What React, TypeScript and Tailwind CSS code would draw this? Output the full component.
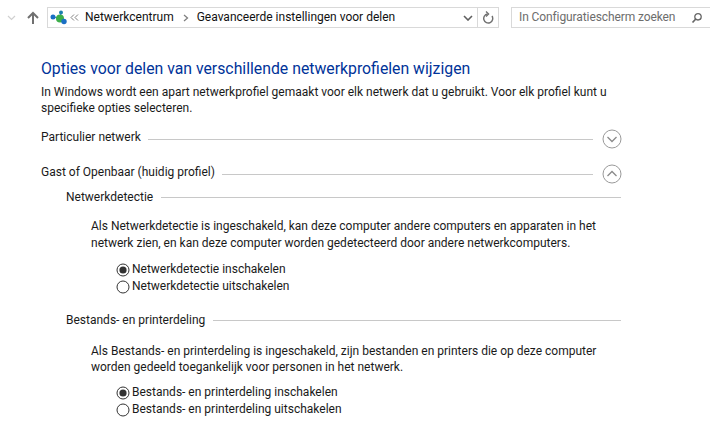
import React from "react";

function Chevron({ up }: { up?: boolean }) {
  return (
    <svg width="20" height="20" viewBox="0 0 20 20" className="shrink-0" fill="none">
      <circle cx="10" cy="10" r="9" stroke="#9a9a9a" strokeWidth="1" />
      <path d={up ? "M5.5 12 L10 7.5 L14.5 12" : "M5.5 8 L10 12.5 L14.5 8"} stroke="#8a8a8a" strokeWidth="1.3" />
    </svg>
  );
}

function Radio({ on, label }: { on?: boolean; label: string }) {
  return (
    <div className="flex items-center h-[17px] gap-[2px]">
      <svg width="14" height="14" viewBox="0 0 14 14" className="shrink-0" fill="none">
        <circle cx="7" cy="7" r="6" fill="#fff" stroke="#333" strokeWidth="1" />
        {on && <circle cx="7" cy="7" r="3.6" fill="#333" />}
      </svg>
      <span>{label}</span>
    </div>
  );
}

function SectionHead({ label, up }: { label: string; up?: boolean }) {
  return (
    <div className="flex items-center h-[20px]">
      <span className="mb-[4px]">{label}</span>
      <div className="flex-1 h-px bg-[#c8c8c8] ml-[7px] mr-[9px]" />
      <Chevron up={up} />
    </div>
  );
}

function SubHead({ label }: { label: string }) {
  return (
    <div className="flex items-center h-[17px] pl-[25px] pr-[1px]">
      <span>{label}</span>
      <div className="flex-1 h-px bg-[#c8c8c8] ml-[8px]" />
    </div>
  );
}

export default function App() {
  return (
    <div className="w-[710px] h-[428px] overflow-hidden bg-white text-[#1a1a1a] text-[12px] leading-[17px] font-['Roboto','Noto_Sans',sans-serif]">
      <div className="flex items-center h-[35px]">
        <svg width="9" height="6" viewBox="0 0 9 6" className="ml-[7px] mr-[10px] shrink-0" fill="none">
          <path d="M1 1 L4.5 4.5 L8 1" stroke="#d0d0d0" strokeWidth="1.2" />
        </svg>
        <svg width="14" height="14" viewBox="0 0 14 14" className="mr-[7px] shrink-0" fill="none">
          <path d="M7 13 V2 M2 7 L7 2 L12 7" stroke="#707070" strokeWidth="2" />
        </svg>
        <div className="w-[452px] h-[21px] border border-[#d9d9d9] flex items-center shrink-0">
          <svg width="17" height="15" viewBox="0 0 17 15" className="ml-[2px] shrink-0">
            <path d="M3 7 L10 8 M11 2.5 L10 8 L14 11.5" stroke="#2a7fb8" strokeWidth="1" fill="none" />
            <circle cx="3" cy="7" r="2.5" fill="#1a6fc4" />
            <circle cx="10" cy="8.5" r="4" fill="#3cae4a" />
            <circle cx="11" cy="2.4" r="2" fill="#1a7fb0" />
            <circle cx="14" cy="11.5" r="2.7" fill="#1a6fc4" />
          </svg>
          <svg width="9" height="7" viewBox="0 0 9 7" className="ml-[3px] shrink-0" fill="none">
            <path d="M4 0.5 L1 3.5 L4 6.5 M8 0.5 L5 3.5 L8 6.5" stroke="#808080" strokeWidth="1" />
          </svg>
          <span className="ml-[6px] text-[#111]">Netwerkcentrum</span>
          <svg width="6" height="8" viewBox="0 0 6 8" className="ml-[9px] mr-[8px] shrink-0" fill="none">
            <path d="M1 1 L4.5 4 L1 7" stroke="#808080" strokeWidth="1.3" />
          </svg>
          <span className="text-[#111]">Geavanceerde instellingen voor delen</span>
          <div className="flex-1" />
          <svg width="10" height="6" viewBox="0 0 10 6" className="mr-[4px] shrink-0" fill="none">
            <path d="M1 1 L5 5 L9 1" stroke="#606060" strokeWidth="1.6" />
          </svg>
          <div className="w-px h-full bg-[#d9d9d9]" />
          <div className="w-[20px] flex justify-center shrink-0">
            <svg width="12" height="13" viewBox="0 0 12 13" fill="none">
              <path d="M10 5 A4.5 4.5 0 1 1 5.5 3" stroke="#707070" strokeWidth="1.4" />
              <path d="M4 0.5 L6.6 3 L4 5.5" stroke="#707070" strokeWidth="1.3" />
            </svg>
          </div>
        </div>
        <div className="ml-[12px] flex-1 h-[21px] border border-[#d9d9d9] border-r-0 flex items-center pl-[7px] text-[#6d6d6d] whitespace-nowrap">
          <span className="tracking-[-0.1px]">In Configuratiescherm zoeken</span>
          <svg width="12" height="12" viewBox="0 0 12 12" className="ml-[16px] shrink-0" fill="none">
            <circle cx="7" cy="4.8" r="3.2" stroke="#666" strokeWidth="1.3" />
            <path d="M4.8 7 L1.5 10.5" stroke="#666" strokeWidth="1.7" />
          </svg>
        </div>
      </div>

      <div className="pl-[41px] pr-[88px] pt-[22px]">
        <h1 className="text-[15.8px] leading-[24px] text-[#003399] font-normal">
          Opties voor delen van verschillende netwerkprofielen wijzigen
        </h1>
        <p className="mt-[3px] mr-[-4px] leading-[16px]">
          In Windows wordt een apart netwerkprofiel gemaakt voor elk netwerk dat u gebruikt. Voor elk profiel kunt u specifieke opties selecteren.
        </p>
        <div className="mt-[13px]">
          <SectionHead label="Particulier netwerk" />
        </div>
        <div className="mt-[15px]">
          <SectionHead label="Gast of Openbaar (huidig profiel)" up />
        </div>
        <div className="mt-[5px]">
          <SubHead label="Netwerkdetectie" />
          <p className="mt-[12px] ml-[50px]">
            Als Netwerkdetectie is ingeschakeld, kan deze computer andere computers en apparaten in het netwerk zien, en kan deze computer worden gedetecteerd door andere netwerkcomputers.
          </p>
          <div className="mt-[9px] ml-[75px]">
            <Radio on label="Netwerkdetectie inschakelen" />
            <Radio label="Netwerkdetectie uitschakelen" />
          </div>
        </div>
        <div className="mt-[17px]">
          <SubHead label="Bestands- en printerdeling" />
          <p className="mt-[14px] ml-[50px] leading-[16px]">
            Als Bestands- en printerdeling is ingeschakeld, zijn bestanden en printers die op deze computer worden gedeeld toegankelijk voor personen in het netwerk.
          </p>
          <div className="mt-[9px] ml-[75px]">
            <Radio on label="Bestands- en printerdeling inschakelen" />
            <Radio label="Bestands- en printerdeling uitschakelen" />
          </div>
        </div>
      </div>
    </div>
  );
}
